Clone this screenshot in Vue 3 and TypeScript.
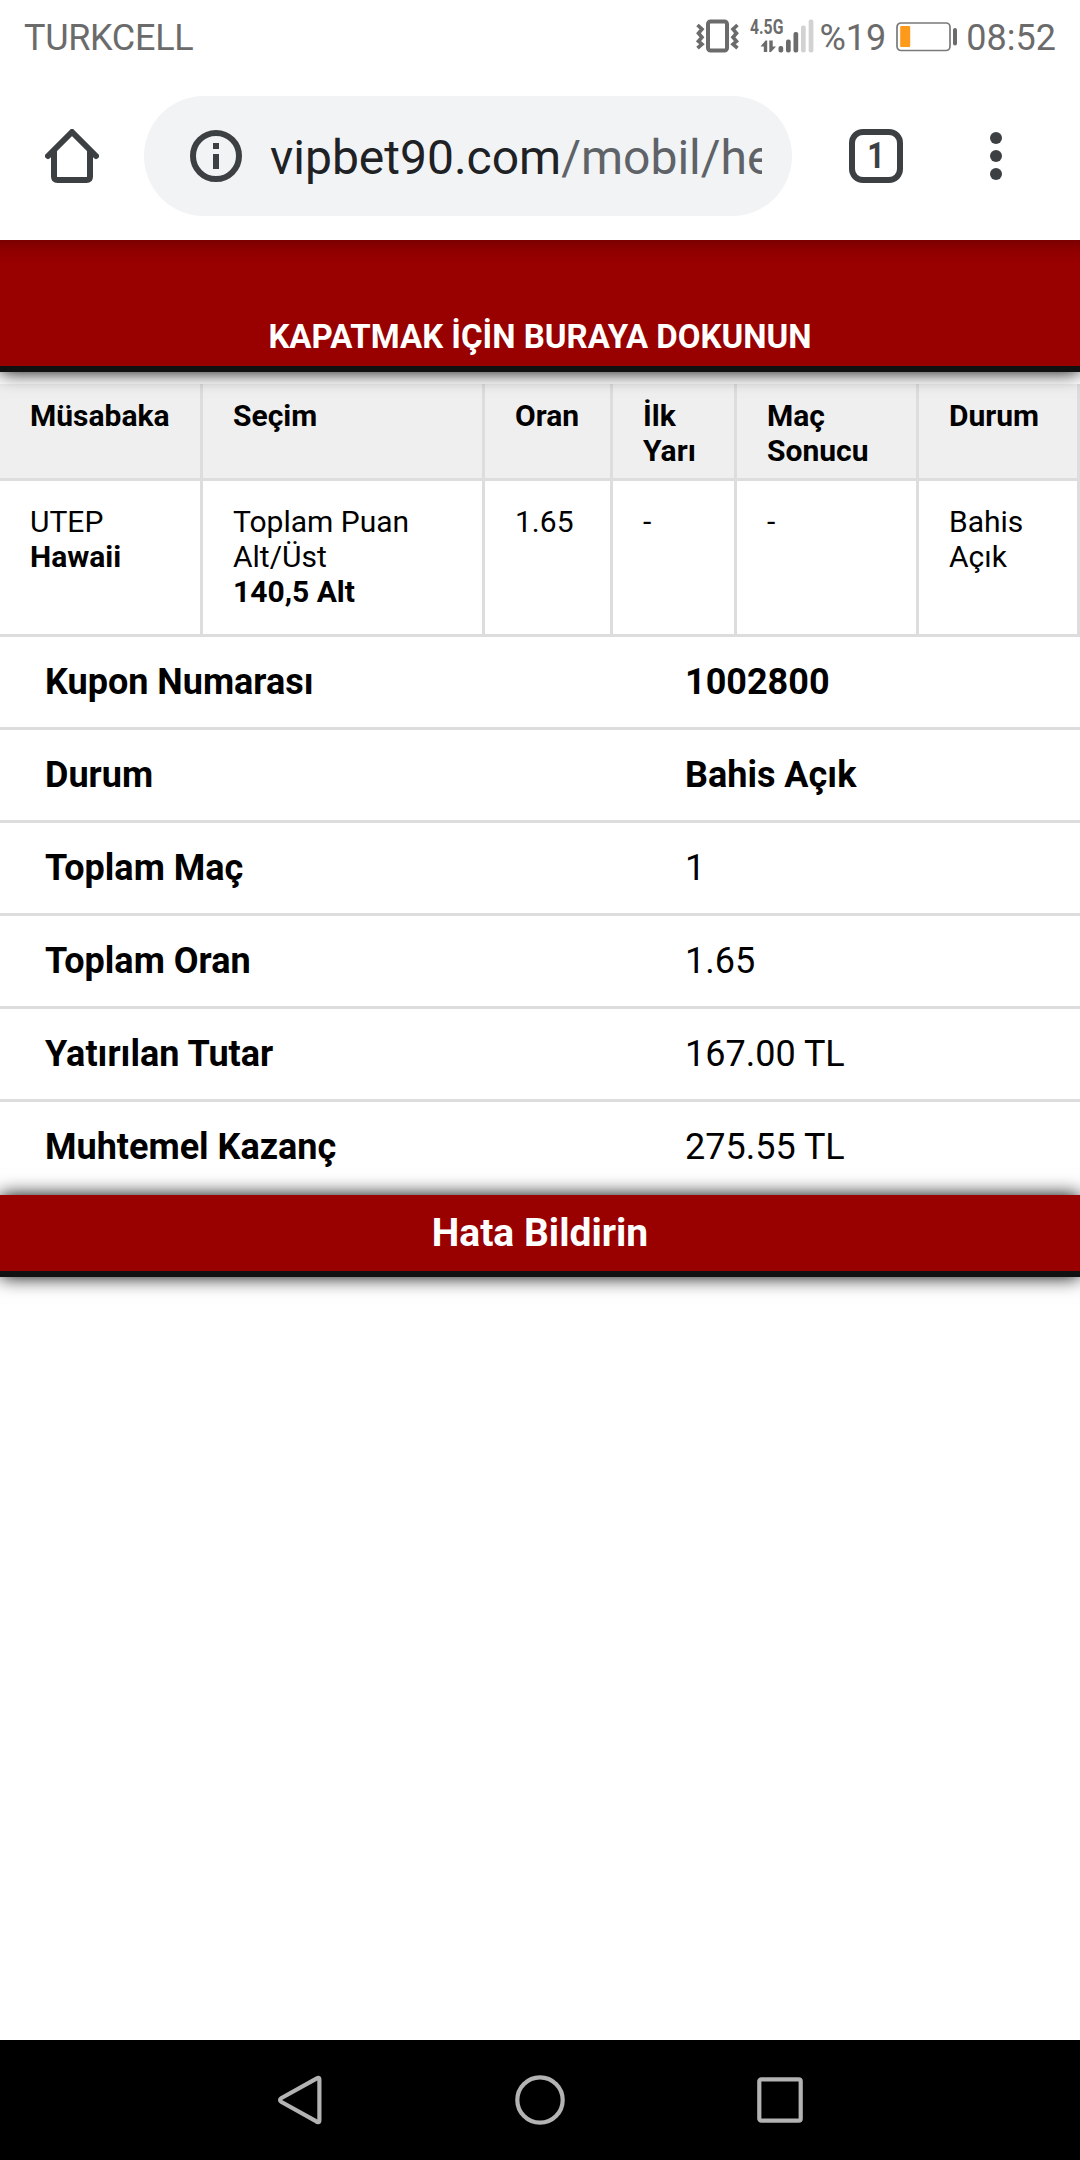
<script setup lang="ts">
interface Bet {
  home: string
  away: string
  market: string
  pick: string
  odds: string
  half: string
  result: string
  status: string
}

interface SummaryRow {
  label: string
  value: string
  strong: boolean
}

const columns: string[] = ['Müsabaka', 'Seçim', 'Oran', 'İlk Yarı', 'Maç Sonucu', 'Durum']

const bets: Bet[] = [
  {
    home: 'UTEP',
    away: 'Hawaii',
    market: 'Toplam Puan Alt/Üst',
    pick: '140,5 Alt',
    odds: '1.65',
    half: '-',
    result: '-',
    status: 'Bahis Açık',
  },
]

const summary: SummaryRow[] = [
  { label: 'Kupon Numarası', value: '1002800', strong: true },
  { label: 'Durum', value: 'Bahis Açık', strong: true },
  { label: 'Toplam Maç', value: '1', strong: false },
  { label: 'Toplam Oran', value: '1.65', strong: false },
  { label: 'Yatırılan Tutar', value: '167.00 TL', strong: false },
  { label: 'Muhtemel Kazanç', value: '275.55 TL', strong: false },
]
</script>

<template>
  <div class="phone">
    <div class="status-bar">
      <span class="carrier">TURKCELL</span>
      <div class="indicators">
        <svg class="vibrate" width="44" height="34" viewBox="0 0 44 34" fill="none" stroke="#6b6b6b">
          <rect x="12" y="2.500" width="19" height="29" rx="2.500" stroke-width="4" />
          <path d="M1.500 6l4.500 4.200-3.500 4 3.500 4-3.500 4 3.500 3-4.500 4M41.500 6l-4.500 4.200 3.500 4-3.500 4 3.500 4-3.500 3 4.500 4" stroke-width="3.600" />
        </svg>
        <div class="network">
          <span class="generation">4.5G</span>
          <svg class="signal" width="64" height="34" viewBox="0 0 64 34">
            <g fill="#6b6b6b">
              <path d="M10.500 27.500L15.500 21.500H17.200V33H13.800V27.500zM26 27.500L21 33H19.300V21.500h3.400v6z" />
              <rect x="28.500" y="27" width="4.700" height="6.500" rx="2" />
              <rect x="36" y="20.500" width="4.700" height="13" rx="2" />
              <rect x="43.500" y="13" width="4.700" height="20.500" rx="2" />
            </g>
            <rect x="51" y="6.500" width="4.700" height="27" rx="2" fill="#d2d2d2" />
            <rect x="58.700" y="0.500" width="4.700" height="33" rx="2" fill="#d2d2d2" />
          </svg>
        </div>
        <span class="percent">%19</span>
        <svg class="battery" width="62" height="30" viewBox="0 0 62 30">
          <rect x="1" y="1" width="53" height="27.500" rx="4" fill="none" stroke="#7a7a7a" stroke-width="1.700" />
          <rect x="4.200" y="4" width="10" height="21" rx="1" fill="#fd9a1c" />
          <rect x="57" y="6" width="4" height="17.500" rx="2" fill="#6b6b6b" />
        </svg>
        <span class="clock">08:52</span>
      </div>
    </div>

    <div class="toolbar">
      <svg class="home" width="54" height="54" viewBox="0 0 54 54" fill="none" stroke="#3c4043" stroke-width="6">
        <path d="M9 22v25.500q0 3.500 3.500 3.500h29q3.500 0 3.500-3.500V22" />
        <path d="M3 27L27 3l24 24" stroke-linecap="round" stroke-linejoin="round" />
      </svg>
      <div class="omnibox">
        <svg class="info" width="52" height="52" viewBox="0 0 52 52">
          <circle cx="26" cy="26" r="23" fill="none" stroke="#3c4043" stroke-width="6" />
          <path d="M23 13h6v6h-6zM23 24h6v15h-6z" fill="#3c4043" />
        </svg>
        <div class="url">vipbet90.com<span class="path">/mobil/he</span></div>
      </div>
      <div class="tabs"><span class="count">1</span></div>
      <svg class="more" width="12" height="48" viewBox="0 0 12 48" fill="#3c4043">
        <circle cx="6" cy="6" r="6" />
        <circle cx="6" cy="24" r="6" />
        <circle cx="6" cy="42" r="6" />
      </svg>
    </div>

    <main class="page">
      <header class="close-bar">KAPATMAK İÇİN BURAYA DOKUNUN</header>
      <table class="coupon">
        <colgroup>
          <col class="c-match" />
          <col class="c-pick" />
          <col class="c-odds" />
          <col class="c-half" />
          <col class="c-result" />
          <col class="c-status" />
        </colgroup>
        <thead>
          <tr>
            <th v-for="c in columns" :key="c">{{ c }}</th>
          </tr>
        </thead>
        <tbody>
          <tr v-for="b in bets" :key="b.home">
            <td>{{ b.home }}<br /><b>{{ b.away }}</b></td>
            <td>{{ b.market }}<br /><b>{{ b.pick }}</b></td>
            <td>{{ b.odds }}</td>
            <td>{{ b.half }}</td>
            <td>{{ b.result }}</td>
            <td>{{ b.status }}</td>
          </tr>
        </tbody>
      </table>
      <div class="summary">
        <div v-for="row in summary" :key="row.label" class="line">
          <span class="label">{{ row.label }}</span>
          <span class="value" :class="{ strong: row.strong }">{{ row.value }}</span>
        </div>
      </div>
      <div class="report">Hata Bildirin</div>
    </main>

    <nav class="nav-bar">
      <svg width="50" height="54" viewBox="0 0 50 54" fill="none" stroke="#b3b3b3" stroke-width="4.200">
        <path d="M39.500 6.200Q43.400 3 43.400 7V47Q43.400 51 39.500 47.800L5.500 29Q2.500 27 5.500 25Z" stroke-linejoin="round" />
      </svg>
      <svg class="nav-home" width="50" height="58" viewBox="0 0 50 58" fill="none" stroke="#b3b3b3" stroke-width="4.200">
        <circle cx="25" cy="29" r="22.700" />
      </svg>
      <svg width="46" height="46" viewBox="0 0 46 46" fill="none" stroke="#b3b3b3" stroke-width="4.200">
        <rect x="2.300" y="2.300" width="41.400" height="41.400" rx="2" />
      </svg>
    </nav>
  </div>
</template>

<style>
body {
  margin: 0;
  background: #fff;
}
</style>

<style scoped>
.phone {
  width: 1080px;
  height: 2160px;
  display: flex;
  flex-direction: column;
  overflow: hidden;
  background: #fff;
  color: #000;
  font-family: Roboto, 'Liberation Sans', sans-serif;
}

.status-bar {
  height: 72px;
  flex: none;
  box-sizing: border-box;
  padding: 0 24px;
  display: flex;
  justify-content: space-between;
  color: #6b6b6b;
  font-size: 36px;
  line-height: 76px;
}

.carrier {
  letter-spacing: -0.3px;
}

.indicators {
  display: flex;
  align-items: flex-start;
}

.vibrate {
  margin: 19px 10px 0 0;
}

.network {
  display: flex;
  position: relative;
  margin: 19px 6px 0 0;
}

.generation {
  position: absolute;
  left: 0;
  top: -1px;
  font-size: 21px;
  line-height: 18px;
  font-weight: 700;
  transform: scaleX(0.75);
  transform-origin: left;
}

.battery {
  margin: 22px 8px 0 10px;
}

.toolbar {
  height: 168px;
  flex: none;
  box-sizing: border-box;
  padding: 24px 78px 24px 45px;
  display: flex;
  align-items: center;
}

.omnibox {
  width: 648px;
  height: 120px;
  box-sizing: border-box;
  margin-left: 45px;
  padding: 0 30px 0 46px;
  border-radius: 60px;
  background: #f1f3f5;
  display: flex;
  align-items: center;
}

.info {
  flex: none;
  margin-right: 28px;
}

.url {
  flex: 1;
  overflow: hidden;
  white-space: nowrap;
  padding-top: 3px;
  font-size: 48px;
  line-height: 64px;
  color: #202124;
}

.path {
  color: #5f6368;
}

.tabs {
  width: 54px;
  height: 54px;
  box-sizing: border-box;
  margin-left: 57px;
  border: 6px solid #3c4043;
  border-radius: 14px;
  color: #3c4043;
  font-size: 36px;
  font-weight: 700;
  line-height: 43px;
  text-align: center;
}

.count {
  display: block;
  transform: scaleX(0.85);
}

.more {
  margin-left: auto;
}

.page {
  flex: 1;
  position: relative;
  overflow: hidden;
}

.page::before {
  content: '';
  position: absolute;
  z-index: 2;
  inset: 0 0 auto;
  height: 24px;
  background: linear-gradient(rgba(0, 0, 0, 0.2), rgba(0, 0, 0, 0.06) 45%, transparent);
}

.close-bar {
  position: relative;
  z-index: 1;
  height: 132px;
  box-sizing: border-box;
  padding-top: 77px;
  border-bottom: 6px solid #111;
  background: #900;
  box-shadow: 0 0 18px #000;
  color: #fff;
  font-size: 33px;
  font-weight: 700;
  line-height: 40px;
  text-align: center;
}

.coupon {
  width: 1080px;
  margin-top: 12px;
  table-layout: fixed;
  border-collapse: separate;
  border-spacing: 0;
  font-size: 30px;
  line-height: 35px;
}

.c-match { width: 203px; }
.c-pick { width: 282px; }
.c-odds { width: 128px; }
.c-half { width: 124px; }
.c-result { width: 182px; }
.c-status { width: 161px; }

th,
td {
  border-right: 3px solid #ddd;
  border-bottom: 3px solid #ddd;
  text-align: left;
  vertical-align: top;
}

th {
  padding: 14px 24px 10px 30px;
  background: #efefef;
  font-weight: 700;
}

td {
  padding: 23px 30px 25px;
}

.line {
  height: 93px;
  box-sizing: border-box;
  padding-left: 45px;
  border-bottom: 3px solid #ddd;
  display: flex;
  font-size: 36px;
  line-height: 90px;
}

.line:last-child {
  border-bottom-color: transparent;
}

.label {
  width: 640px;
  font-weight: 700;
}

.strong {
  font-weight: 700;
}

.report {
  height: 82px;
  box-sizing: border-box;
  border-bottom: 6px solid #111;
  background: #900;
  box-shadow: 0 0 18px #000;
  color: #fff;
  font-size: 39px;
  font-weight: 700;
  line-height: 76px;
  text-align: center;
}

.nav-bar {
  height: 120px;
  flex: none;
  box-sizing: border-box;
  padding: 0 277px 0 276px;
  background: #000;
  display: flex;
  align-items: center;
  justify-content: space-between;
}

.nav-home {
  margin: 0 3px 0 0;
}
</style>
